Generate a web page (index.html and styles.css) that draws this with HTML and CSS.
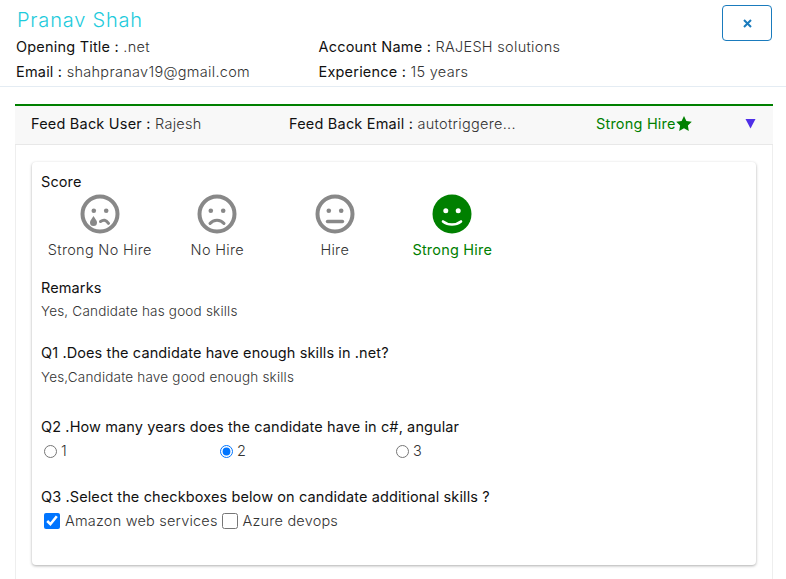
FILE: index.html
```html
<!DOCTYPE html>
<html lang="en">
<head>
<meta charset="utf-8">
<title>Feedback</title>
<link rel="stylesheet" href="styles.css">
</head>
<body>
<header class="top">
  <div class="top-main">
    <h1 class="name">Pranav Shah</h1>
    <div class="facts">
      <div class="fact"><b>Opening Title :</b> .net</div>
      <div class="fact"><b>Account Name :</b> RAJESH solutions</div>
      <div class="fact"><b>Email :</b> shahpranav19@gmail.com</div>
      <div class="fact"><b>Experience :</b> 15 years</div>
    </div>
  </div>
  <button class="close" type="button" aria-label="Close">
    <svg width="9" height="9" viewBox="0 0 9 9"><path d="M1 1l7 7M8 1L1 8" stroke="#1a7bbd" stroke-width="2" fill="none"/></svg>
  </button>
</header>
<section class="panel">
  <div class="panel-head">
    <div class="ph-user"><b>Feed Back User :</b> Rajesh</div>
    <div class="ph-email"><b>Feed Back Email :</b> autotriggere...</div>
    <div class="ph-status">Strong Hire<svg width="16" height="15" viewBox="0 0 16 15"><path d="M8 0l2.4 4.9 5.4.8-3.9 3.8.9 5.4L8 12.3 3.2 14.9l.9-5.4L.2 5.700l5.4-.8z" fill="#008000"/></svg></div>
    <svg class="ph-arrow" width="11" height="11" viewBox="0 0 11 11"><path d="M0.500 1h10L5.500 10.500z" fill="#4f2fe8"/></svg>
  </div>
  <div class="panel-body">
    <div class="card">
      <div class="label">Score</div>
      <div class="scores">
        <div class="score">
          <svg width="40" height="40" viewBox="0 0 40 40"><circle cx="20" cy="20" r="17.500" fill="none" stroke="#888" stroke-width="4"/><circle cx="13.800" cy="16.700" r="2.300" fill="#888"/><circle cx="26.200" cy="16.700" r="2.300" fill="#888"/><path d="M13.500 22c-1.800 3-3.500 4.500-3.500 6.500a3.500 3.500 0 0 0 7 0c0-2-1.700-3.500-3.500-6.500z" fill="#888"/><path d="M20.500 27.500c3-2.200 5.500-1.800 8 1.800" fill="none" stroke="#888" stroke-width="3" stroke-linecap="round"/></svg>
          <span>Strong No Hire</span>
        </div>
        <div class="score">
          <svg width="40" height="40" viewBox="0 0 40 40"><circle cx="20" cy="20" r="17.500" fill="none" stroke="#888" stroke-width="4"/><circle cx="13.800" cy="16.700" r="2.300" fill="#888"/><circle cx="26.200" cy="16.700" r="2.300" fill="#888"/><path d="M13 29.500c3.500-4.500 10.500-4.500 14 0" fill="none" stroke="#888" stroke-width="3" stroke-linecap="round"/></svg>
          <span>No Hire</span>
        </div>
        <div class="score">
          <svg width="40" height="40" viewBox="0 0 40 40"><circle cx="20" cy="20" r="17.500" fill="none" stroke="#888" stroke-width="4"/><circle cx="13.800" cy="16.700" r="2.300" fill="#888"/><circle cx="26.200" cy="16.700" r="2.300" fill="#888"/><path d="M12.500 27.500h15" fill="none" stroke="#888" stroke-width="3.400" stroke-linecap="round"/></svg>
          <span>Hire</span>
        </div>
        <div class="score score-on">
          <svg width="40" height="40" viewBox="0 0 40 40"><circle cx="20" cy="20" r="19.500" fill="#008000"/><circle cx="13.800" cy="16.700" r="2.500" fill="#fff"/><circle cx="26.200" cy="16.700" r="2.500" fill="#fff"/><path d="M11 27.500c5 4 13 4 18 0" fill="none" stroke="#fff" stroke-width="2.600" stroke-linecap="round"/></svg>
          <span>Strong Hire</span>
        </div>
      </div>
      <div class="label remarks">Remarks</div>
      <p class="answer">Yes, Candidate has good skills</p>
      <div class="label q1">Q1 .Does the candidate have enough skills in .net?</div>
      <p class="answer answer-q1">Yes,Candidate have good enough skills</p>
      <div class="label q2">Q2 .How many years does the candidate have in c#, angular</div>
      <div class="radios">
        <label class="opt"><input type="radio" name="years">1</label>
        <label class="opt"><input type="radio" name="years" checked>2</label>
        <label class="opt"><input type="radio" name="years">3</label>
      </div>
      <div class="label q3">Q3 .Select the checkboxes below on candidate additional skills ?</div>
      <div class="checks">
        <label class="chk"><input type="checkbox" checked>Amazon web services</label>
        <label class="chk"><input type="checkbox">Azure devops</label>
      </div>
    </div>
  </div>
</section>
</body>
</html>
```
FILE: styles.css
```css
* { box-sizing: border-box; }
html, body { height: 100%; }
body {
  margin: 0;
  background: #fff;
  color: #333;
  font-family: "Inter", "Liberation Sans", sans-serif;
  font-size: 14.500px;
  font-weight: 300;
  letter-spacing: .3px;
  overflow: hidden;
}
b { font-weight: 400; color: #111; letter-spacing: .2px; }
.top {
  display: flex;
  justify-content: space-between;
  align-items: flex-start;
  height: 87px;
  padding: 5px 14px 0 16px;
  border-bottom: 1px solid #e4ecf3;
}
.name {
  margin: 2px 0 4px 1px;
  font-size: 20px;
  line-height: 27px;
  font-weight: 300;
  letter-spacing: .8px;
  color: #1fcbdc;
}
.facts {
  display: grid;
  grid-template-columns: 302.500px 1fr;
  row-gap: 7px;
  line-height: 18px;
}
.close {
  width: 50px;
  height: 36px;
  padding: 0;
  background: #fff;
  border: 1px solid #1a7bbd;
  border-radius: 4px;
  display: flex;
  align-items: center;
  justify-content: center;
}
.panel { margin: 17px 13px 0 15px; }
.panel-head {
  display: flex;
  align-items: center;
  height: 41px;
  padding: 0 0 3px 16px;
  background: #f8f8f8;
  border-top: 2px solid #008000;
  border-bottom: 1px solid #e8e8e8;
}
.ph-user { width: 258px; }
.ph-email { width: 307px; }
.ph-status {
  display: flex;
  align-items: center;
  width: 149px;
  color: #008000;
  font-weight: 400;
  letter-spacing: .2px;
}
.panel-body {
  padding: 17px 16px 16px;
  border-left: 1px solid #eee;
  border-right: 1px solid #eee;
  height: 440px;
}
.card {
  height: 403px;
  padding: 11px 9px;
  border-radius: 4px;
  background: #fff;
  box-shadow: 0 1px 3px rgba(0,0,0,.32);
}
.label { font-weight: 400; color: #111; line-height: 18px; letter-spacing: .11px; }
.scores { display: flex; margin-top: 3px; }
.score {
  width: 117.500px;
  display: flex;
  flex-direction: column;
  align-items: center;
  gap: 6px;
  line-height: 20px;
  white-space: nowrap;
}
.score-on { color: #008000; font-weight: 400; letter-spacing: .2px; }
.remarks { margin-top: 19px; }
.answer { margin: 6px 0 0; font-size: 13.500px; line-height: 16px; letter-spacing: .2px; }
.answer-q1 { margin-top: 7px; }
.q1 { margin-top: 25px; }
.q2 { margin-top: 33px; }
.q3 { margin-top: 28px; }
.radios { display: grid; grid-template-columns: 176px 176px 1fr; margin-top: 6px; line-height: 18px; }
.opt { display: flex; align-items: center; padding-left: 3px; }
.opt input { width: 13px; height: 13px; margin: 0 4px 0 0; }
.checks { display: flex; gap: 4px; margin-top: 5px; margin-left: 3px; line-height: 20px; letter-spacing: .2px; }
.chk { display: flex; align-items: center; }
.chk input { width: 16px; height: 16px; margin: 0 5px 0 0; }
```
